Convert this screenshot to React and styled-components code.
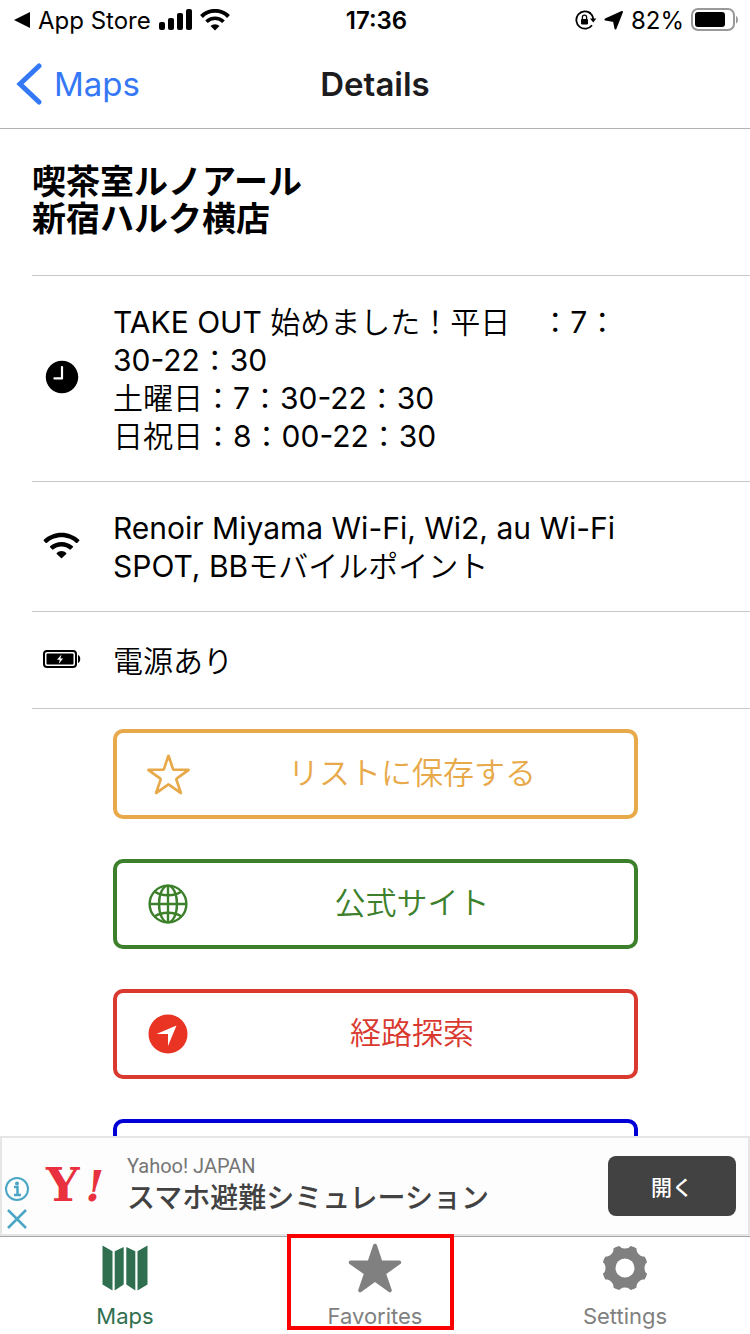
import React, { useState } from "react";
import styled, { createGlobalStyle } from "styled-components";
import {
	IoIosStar,
	IoIosStarOutline,
	IoIosTime,
	IoIosWifi,
} from "react-icons/io";

const lightJp = `Inter, "Noto Sans CJK JP DemiLight", "Noto Sans CJK JP", sans-serif`;

const GlobalStyle = createGlobalStyle`
	* {
		box-sizing: border-box;
	}

	body {
		margin: 0;
		background: white;
		color: black;
		font-family: Inter, "Noto Sans CJK JP", sans-serif;
	}

	button {
		font-family: inherit;
		cursor: pointer;
	}

	svg {
		flex-shrink: 0;
	}
`;

const Screen = styled.div`
	height: 100vh;
	display: flex;
	flex-direction: column;
`;

const StatusBar = styled.div`
	height: 40px;
	padding: 0 11px 0 14px;
	display: grid;
	grid-template-columns: 1fr auto 1fr;
	align-items: center;
	font-size: 24px;
	flex-shrink: 0;
`;

const StatusGroup = styled.div`
	display: flex;
	align-items: center;
	justify-content: ${(props) => (props.$end ? "flex-end" : "flex-start")};
	gap: ${(props) => (props.$end ? "7px" : "8px")};
`;

const Time = styled.span`
	font-weight: 600;
`;

const NavBar = styled.header`
	height: 89px;
	padding: 0 16px;
	display: grid;
	grid-template-columns: 1fr auto 1fr;
	align-items: center;
	border-bottom: 1px solid #b2b2b2;
	flex-shrink: 0;
`;

const BackLink = styled.a`
	display: flex;
	align-items: center;
	gap: 12px;
	color: #3478f6;
	font-size: 33px;
	text-decoration: none;
`;

const NavTitle = styled.h1`
	margin: 0;
	font-size: 33px;
	font-weight: 600;
	color: #1c1c1e;
`;

const Content = styled.main`
	flex: 1;
	min-height: 0;
	overflow: hidden;
`;

const ShopName = styled.h2`
	margin: 0 0 0 32px;
	padding: 34px 0 38px;
	font-size: 34px;
	line-height: 37px;
	font-weight: 700;
	border-bottom: 1px solid #c8c7cc;
`;

const Row = styled.div`
	min-height: 97px;
	margin-left: 32px;
	padding: 27px 0 26px;
	display: flex;
	align-items: center;
	border-bottom: 1px solid #c8c7cc;
`;

const RowIcon = styled.div`
	width: 59px;
	margin-right: 22px;
	padding-bottom: 4px;
	display: flex;
	justify-content: center;
`;

const RowText = styled.p`
	margin: 0;
	flex: 1;
	font-family: ${lightJp};
	font-size: 30px;
	line-height: 38px;
	white-space: pre-line;
`;

const Actions = styled.div`
	width: 70%;
	margin: 20px auto 0;
	display: flex;
	flex-direction: column;
	gap: 40px;
`;

const ActionButton = styled.button`
	height: 90px;
	padding: 0 0 0 30px;
	display: flex;
	align-items: center;
	background: white;
	border: 4px solid ${(props) => props.$color};
	border-radius: 10px;
	color: ${(props) => props.$color};
	font-family: ${lightJp};
	font-size: 31px;
	flex-shrink: 0;
`;

const ActionIcon = styled.span`
	width: 44px;
	display: flex;
	justify-content: center;
`;

const ActionLabel = styled.span`
	flex: 1;
	padding-bottom: 8px;
`;

const AdBanner = styled.aside`
	height: 100px;
	padding: 0 12px 0 2px;
	display: flex;
	align-items: center;
	border: 2px solid #e5e5e5;
	background: #fdfdfd;
	flex-shrink: 0;
`;

const AdControls = styled.div`
	align-self: flex-end;
	display: flex;
	flex-direction: column;
	gap: 4px;
	padding-bottom: 2px;
`;

const IconButton = styled.button`
	padding: 0;
	display: flex;
	border: none;
	background: none;
`;

const AdLogo = styled.div`
	width: 62px;
	margin: 0 19px 0 16px;
	color: #e8303e;
	font-family: "DejaVu Serif", serif;
	font-size: 47px;
	line-height: 48px;
	font-weight: 700;
	white-space: nowrap;

	i {
		margin-left: 6px;
		font-size: 42px;
	}
`;

const AdText = styled.div`
	flex: 1;
`;

const Advertiser = styled.div`
	font-family: Roboto, "Noto Sans CJK JP", sans-serif;
	font-size: 20px;
	line-height: 24px;
	color: #757575;
`;

const AdTitle = styled.div`
	font-size: 28px;
	line-height: 40px;
	font-weight: 500;
	color: #424242;
`;

const OpenButton = styled.button`
	width: 128px;
	height: 60px;
	border: none;
	border-radius: 8px;
	background: #424242;
	color: white;
	font-size: 21px;
	font-weight: 500;
`;

const TabBar = styled.nav`
	height: 98px;
	display: flex;
	border-top: 1px solid #a7a7aa;
	flex-shrink: 0;
`;

const Tab = styled.a`
	position: relative;
	flex: 1;
	padding-top: 4px;
	display: flex;
	flex-direction: column;
	align-items: center;
	gap: 7px;
	color: ${(props) => (props.$active ? "#2f6f4f" : "#808080")};
	font-size: 22px;
	line-height: 28px;
	text-decoration: none;
`;

const TabIcon = styled.span`
	height: 54px;
	display: flex;
	align-items: center;
`;

const Highlight = styled.div`
	position: absolute;
	top: -3px;
	bottom: 4px;
	left: 37px;
	right: 46px;
	border: 4px solid #fa0000;
`;

const SignalIcon = () => (
	<svg width="33" height="22" viewBox="0 0 33 22">
		<rect x="0" y="13" width="6" height="8" rx="2" />
		<rect x="9" y="9" width="6" height="12" rx="2" />
		<rect x="18" y="4" width="6" height="17" rx="2" />
		<rect x="27" y="0" width="6" height="21" rx="2" />
	</svg>
);

const WifiIcon = () => (
	<svg width="30" height="22" viewBox="0 0 30 22" fill="none" stroke="black">
		<path d="M1.5 7.5a19 19 0 0 1 27 0" strokeWidth="4" />
		<path d="M6.5 12.8a12 12 0 0 1 17 0" strokeWidth="3.6" />
		<path d="M15 21.5l-4.5-4.4a6.5 6.5 0 0 1 9 0z" fill="black" stroke="none" />
	</svg>
);

const RotationLockIcon = () => (
	<svg width="22" height="20" viewBox="0 0 22 20" fill="none" stroke="black">
		<path d="M15.6 3.3A8.7 8.7 0 1 0 17 15.2" strokeWidth="1.8" />
		<path d="M14.2 2.4A8.7 8.7 0 0 1 18.2 9" strokeWidth="1.8" />
		<path d="M15 8.6h6.4l-3.2 4z" fill="black" stroke="none" />
		<rect x="6" y="9" width="7" height="5.4" rx="0.8" fill="black" stroke="none" />
		<path d="M7.4 9V7.2a2.1 2.1 0 0 1 4.2 0V9" strokeWidth="1.3" />
	</svg>
);

const LocationIcon = () => (
	<svg width="20" height="20" viewBox="0 0 20 20">
		<path
			d="M18 2L1.5 9.5l8.5 1.5 1.5 7.500z"
			stroke="black"
			strokeWidth="2"
			strokeLinejoin="round"
		/>
	</svg>
);

const BatteryIcon = () => (
	<svg width="48" height="24" viewBox="0 0 48 24">
		<rect x="1" y="1" width="42" height="21" rx="6" fill="none" stroke="#999" strokeWidth="2" />
		<rect x="4" y="4" width="30" height="15" rx="3" />
		<path d="M45 8c2.6 1 2.6 6.5 0 7.5z" fill="#999" />
	</svg>
);

const ChargingIcon = () => (
	<svg width="38" height="18" viewBox="0 0 38 18">
		<rect x="1" y="1" width="32" height="16" rx="3" fill="none" stroke="black" strokeWidth="2" />
		<rect x="3.5" y="3.5" width="27" height="11" rx="1" />
		<path d="M35 5c3 1 3 7 0 8z" />
		<path d="M18.5 4.5l-4.5 5.3h2.8l-1 4 4.3-5.3h-2.7z" fill="white" />
	</svg>
);

const GlobeIcon = () => (
	<svg width="42" height="40" viewBox="-20 -20 42 40" fill="none" stroke="currentColor" strokeWidth="2.4">
		<circle r="18.4" />
		<ellipse rx="9" ry="18.4" />
		<path d="M0-18.400v36.800M-18.400 0h36.800" />
		<path d="M-13.500-12.500c7 5 20 5 27 0M-13.500 12.500c7-5 20-5 27 0" />
	</svg>
);

const NavigateIcon = () => (
	<svg width="42" height="40" viewBox="0 0 42 40">
		<circle cx="20" cy="20" r="19.5" fill="#e93323" />
		<path d="M28.5 11.5L8.5 20H20v12z" fill="white" />
	</svg>
);

const MapIcon = () => (
	<svg width="46" height="46" viewBox="0 0 46 46" fill="currentColor">
		<path d="M.5.5l10 5.700v39.300l-10-6z" />
		<path d="M12.700 6.200l9-4.200v37.500l-9 6z" />
		<path d="M24.300 2l9 4.200v39.300l-9-6z" />
		<path d="M35.500 6.200l10-5.700v39l-10 6z" />
	</svg>
);

const GearIcon = () => (
	<svg width="46" height="46" viewBox="-23 -23 46 46">
		<mask id="gear">
			<circle r="23" fill="white" />
			<circle r="9.5" fill="black" />
			{[0, 45, 90, 135, 180, 225, 270, 315].map((angle) => (
				<ellipse
					key={angle}
					cy="-23.5"
					rx="6"
					ry="4"
					fill="black"
					transform={`rotate(${angle})`}
				/>
			))}
		</mask>
		<circle r="23" fill="currentColor" mask="url(#gear)" />
	</svg>
);

const rows = [
	{
		icon: <IoIosTime size={40} />,
		text: "TAKE OUT 始めました！平日　：7：\n30-22：30\n土曜日：7：30-22：30\n日祝日：8：00-22：30",
	},
	{
		icon: <IoIosWifi size={41} />,
		text: "Renoir Miyama Wi-Fi, Wi2, au Wi-Fi\nSPOT, BBモバイルポイント",
	},
	{ icon: <ChargingIcon />, text: "電源あり" },
];

const actions = [
	{ label: "リストに保存する", color: "#e8a94a", icon: <IoIosStarOutline size={49} /> },
	{ label: "公式サイト", color: "#3c802b", icon: <GlobeIcon /> },
	{ label: "経路探索", color: "#d9392f", icon: <NavigateIcon /> },
	{ label: "", color: "#0000d6", icon: null },
];

const tabs = [
	{ label: "Maps", icon: <MapIcon /> },
	{ label: "Favorites", icon: <IoIosStar size={60} /> },
	{ label: "Settings", icon: <GearIcon /> },
];

export default function App() {
	const [active, setActive] = useState("Maps");
	const [showAd, setShowAd] = useState(true);

	return (
		<Screen>
			<GlobalStyle />
			<StatusBar>
				<StatusGroup>
					<svg width="16" height="16" viewBox="0 0 16 16">
						<path d="M0 8L16 0v16z" />
					</svg>
					<span>App Store</span>
					<SignalIcon />
					<WifiIcon />
				</StatusGroup>
				<Time>17:36</Time>
				<StatusGroup $end>
					<RotationLockIcon />
					<LocationIcon />
					<span>82%</span>
					<BatteryIcon />
				</StatusGroup>
			</StatusBar>
			<NavBar>
				<BackLink href="#maps">
					<svg width="26" height="42" viewBox="0 0 26 42" fill="none">
						<path d="M23 3L4 21l19 18" stroke="currentColor" strokeWidth="5" strokeLinecap="round" />
					</svg>
					Maps
				</BackLink>
				<NavTitle>Details</NavTitle>
			</NavBar>
			<Content>
				<ShopName>
					喫茶室ルノアール
					<br />
					新宿ハルク横店
				</ShopName>
				{rows.map((row) => (
					<Row key={row.text}>
						<RowIcon>{row.icon}</RowIcon>
						<RowText>{row.text}</RowText>
					</Row>
				))}
				<Actions>
					{actions.map((action) => (
						<ActionButton key={action.color} $color={action.color}>
							<ActionIcon>{action.icon}</ActionIcon>
							<ActionLabel>{action.label}</ActionLabel>
						</ActionButton>
					))}
				</Actions>
			</Content>
			{showAd && (
				<AdBanner>
					<AdControls>
						<IconButton aria-label="Ad info">
							<svg width="26" height="26" viewBox="0 0 26 26" fill="none" stroke="#4ba6c6">
								<circle cx="13" cy="13" r="11" strokeWidth="2" />
								<path d="M10 11h3.5v8M10 19h7" strokeWidth="2.5" />
								<circle cx="13" cy="7.5" r="2" fill="#4ba6c6" stroke="none" />
							</svg>
						</IconButton>
						<IconButton aria-label="Close ad" onClick={() => setShowAd(false)}>
							<svg width="26" height="26" viewBox="0 0 26 26">
								<path d="M4 4l18 18M22 4L4 22" stroke="#4ba6c6" strokeWidth="2.5" />
							</svg>
						</IconButton>
					</AdControls>
					<AdLogo>
						Y<i>!</i>
					</AdLogo>
					<AdText>
						<Advertiser>Yahoo! JAPAN</Advertiser>
						<AdTitle>スマホ避難シミュレーション</AdTitle>
					</AdText>
					<OpenButton>開く</OpenButton>
				</AdBanner>
			)}
			<TabBar>
				{tabs.map((tab) => (
					<Tab
						key={tab.label}
						href={`#${tab.label.toLowerCase()}`}
						$active={active === tab.label}
						onClick={() => setActive(tab.label)}
					>
						<TabIcon>{tab.icon}</TabIcon>
						{tab.label}
						{tab.label === "Favorites" && <Highlight />}
					</Tab>
				))}
			</TabBar>
		</Screen>
	);
}
